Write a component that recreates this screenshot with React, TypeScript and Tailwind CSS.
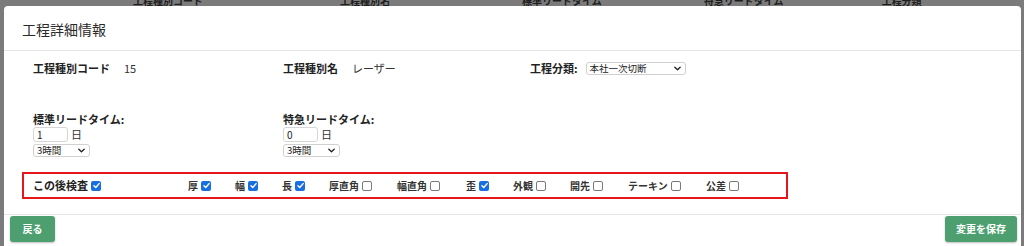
import React from "react";

const FONT = '"Noto Sans CJK JP","Noto Sans",sans-serif';

function Check({ checked }: { checked: boolean }) {
  return checked ? (
    <span className="inline-flex w-[10px] h-[10px] rounded-[2px] bg-[#1a6fe0] items-center justify-center shrink-0">
      <svg viewBox="0 0 10 10" className="w-[9px] h-[9px]">
        <path d="M2.2 5.2 L4.2 7.2 L7.9 2.9" fill="none" stroke="white" strokeWidth="1.6" strokeLinecap="round" strokeLinejoin="round" />
      </svg>
    </span>
  ) : (
    <span className="inline-block w-[10px] h-[10px] rounded-[2px] border border-[#7a7a7a] bg-white shrink-0" />
  );
}

function Chevron() {
  return (
    <svg viewBox="0 0 10 6" className="w-[7px] h-[5px]">
      <path d="M1.2 1.2 L5 4.8 L8.8 1.2" fill="none" stroke="#222" strokeWidth="1.9" strokeLinecap="round" strokeLinejoin="round" />
    </svg>
  );
}

function MiniSelect({ text, w }: { text: string; w: string }) {
  return (
    <div className={`${w} h-[13px] rounded-[3px] border border-[#d0d0d0] bg-white flex items-center justify-between pl-[3px] pr-[4px]`}>
      <span className="text-[9.5px] leading-none text-[#222]">{text}</span>
      <Chevron />
    </div>
  );
}

function LeadTime({ label, value }: { label: string; value: string }) {
  return (
    <div className="flex flex-col">
      <div className="text-[11px] leading-[13px] font-bold text-[#222]">{label}</div>
      <div className="flex items-center gap-[3px] mt-[1px]">
        <div className="w-[35px] h-[15px] rounded-[3px] border border-[#d6d6d6] bg-white flex items-center pl-[3px]">
          <span className="text-[10px] leading-none text-[#222]">{value}</span>
        </div>
        <span className="text-[11px] leading-none text-[#333]">日</span>
      </div>
      <div className="mt-[2px]">
        <MiniSelect text="3時間" w="w-[57px]" />
      </div>
    </div>
  );
}

const items: { label: string; checked: boolean; w: string }[] = [
  { label: "厚", checked: true, w: "w-[47px]" },
  { label: "幅", checked: true, w: "w-[47px]" },
  { label: "長", checked: true, w: "w-[47px]" },
  { label: "厚直角", checked: false, w: "w-[68px]" },
  { label: "幅直角", checked: false, w: "w-[69px]" },
  { label: "歪", checked: true, w: "w-[47px]" },
  { label: "外観", checked: false, w: "w-[57px]" },
  { label: "開先", checked: false, w: "w-[58px]" },
  { label: "テーキン", checked: false, w: "w-[78px]" },
  { label: "公差", checked: false, w: "w-[50px]" },
];

export default function App() {
  return (
    <div className="w-[1024px] h-[246px] overflow-hidden bg-[#7b7b7b] flex flex-col" style={{ fontFamily: FONT }}>
      {/* page behind the backdrop */}
      <div className="h-[6px] overflow-hidden shrink-0">
        <div className="flex items-end h-[6px] text-[10px] leading-[10px] font-bold text-[#1e1e1e] -mt-[0px]">
          <div className="h-[10px] -mt-[4px] flex">
            <span className="ml-[133px]">工程種別コード</span>
            <span className="ml-[137px]">工程種別名</span>
            <span className="ml-[132px]">標準リードタイム</span>
            <span className="ml-[102px]">特急リードタイム</span>
            <span className="ml-[98px]">工程分類</span>
          </div>
        </div>
      </div>

      <div className="ml-[4px] w-[1017px] flex-1 bg-white rounded-t-[4px] flex flex-col">
        {/* header */}
        <div className="h-[45px] border-b border-[#e6e6e6] flex items-center pl-[18px] shrink-0">
          <h1 className="text-[14px] leading-none text-[#2a2a2a] mt-[1px]">工程詳細情報</h1>
        </div>

        {/* body */}
        <div className="pl-[29px] pt-[11px] flex flex-col">
          <div className="flex items-center h-[13px]">
            <div className="w-[250px] flex items-center">
              <span className="text-[11px] font-bold text-[#222] leading-none">工程種別コード</span>
              <span className="text-[11px] text-[#333] leading-none ml-[14px]">15</span>
            </div>
            <div className="w-[247px] flex items-center">
              <span className="text-[11px] font-bold text-[#222] leading-none">工程種別名</span>
              <span className="text-[11px] text-[#333] leading-none ml-[14px]">レーザー</span>
            </div>
            <div className="flex items-center">
              <span className="text-[11px] font-bold text-[#222] leading-none">工程分類:</span>
              <div className="ml-[8px]">
                <MiniSelect text="本社一次切断" w="w-[100px]" />
              </div>
            </div>
          </div>

          <div className="flex mt-[38px]">
            <div className="w-[250px]">
              <LeadTime label="標準リードタイム:" value="1" />
            </div>
            <div>
              <LeadTime label="特急リードタイム:" value="0" />
            </div>
          </div>

          <div className="-ml-[11px] mt-[15px] w-[766px] h-[27px] border-2 border-[#e5161d] flex items-center pl-[9px]">
            <div className="w-[155px] flex items-center gap-[3px]">
              <span className="text-[11px] font-bold text-[#222] leading-none">この後検査</span>
              <Check checked={true} />
            </div>
            {items.map((it) => (
              <div key={it.label} className={`${it.w} flex items-center gap-[3px]`}>
                <span className="text-[10px] font-bold text-[#333] leading-none">{it.label}</span>
                <Check checked={it.checked} />
              </div>
            ))}
          </div>
        </div>

        {/* footer */}
        <div className="mt-[15px] border-t border-[#e6e6e6] flex justify-between pl-[6px] pr-[4px] pt-[1px]">
          <button className="w-[45px] h-[26px] rounded-[3px] bg-[#4d9f6f] text-white text-[10px] font-bold leading-none shadow-[0_1px_2px_rgba(0,0,0,0.25)]">
            戻る
          </button>
          <button className="w-[72px] h-[26px] rounded-[3px] bg-[#4d9f6f] text-white text-[10px] font-bold leading-none shadow-[0_1px_2px_rgba(0,0,0,0.25)]">
            変更を保存
          </button>
        </div>
      </div>
    </div>
  );
}
